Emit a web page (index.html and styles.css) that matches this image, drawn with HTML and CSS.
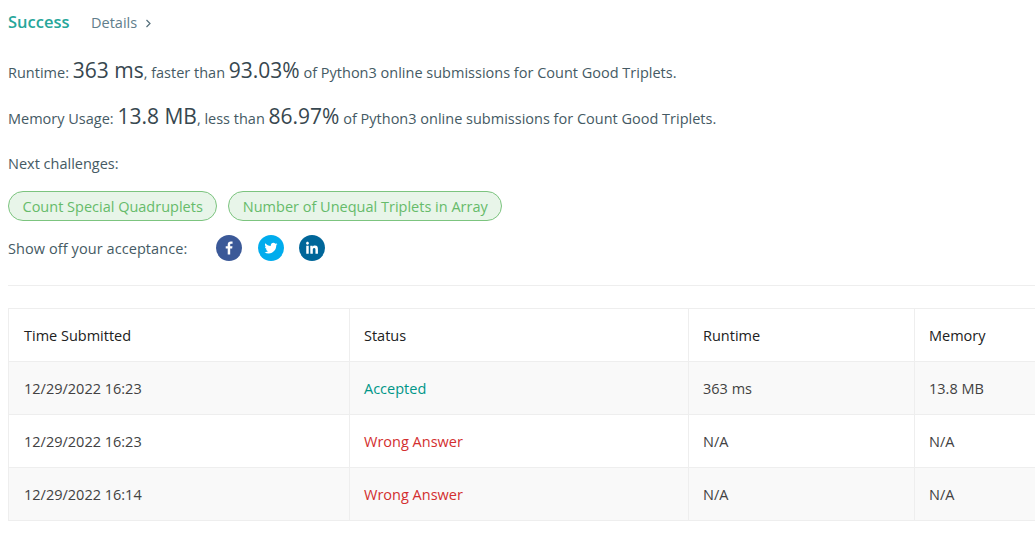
FILE: index.html
```html
<!DOCTYPE html>
<html>
  <head>
    <title>Submission Detail</title>
    <link rel="stylesheet" href="styles.css">
  </head>
  <body>
    <div class="result-head">
      <span class="success">Success</span>
      <span class="details">Details</span>
      <svg class="chevron" width="7" height="9" viewBox="0 0 7 9"><path d="M1.500 1 L5 4.500 L1.500 8" fill="none" stroke="#546e7a" stroke-width="1.200"/></svg>
    </div>
    <p class="stat stat-first">Runtime: <span class="big">363 ms</span>, faster than <span class="big">93.03%</span> of Python3 online submissions for Count Good Triplets.</p>
    <p class="stat">Memory Usage: <span class="big">13.8 MB</span>, less than <span class="big">86.97%</span> of Python3 online submissions for Count Good Triplets.</p>
    <p class="stat next-label">Next challenges:</p>
    <div class="tags">
      <a class="tag">Count Special Quadruplets</a>
      <a class="tag">Number of Unequal Triplets in Array</a>
    </div>
    <div class="share">
      <span class="share-label">Show off your acceptance:</span>
      <svg class="social" width="26" height="26" viewBox="0 0 26 26"><circle cx="13" cy="13" r="13" fill="#3b5998"/><path transform="translate(.6 .6) scale(.95)" d="M14.300 20v-6.300h2.100l.3-2.500h-2.400V9.700c0-.7.200-1.200 1.200-1.200h1.300V6.300c-.2 0-1-.1-1.900-.1-1.900 0-3.200 1.200-3.200 3.300v1.700H9.600v2.500h2.100V20z" fill="#fff"/></svg>
      <svg class="social" width="26" height="26" viewBox="0 0 26 26"><circle cx="13" cy="13" r="13" fill="#00aced"/><path transform="translate(1.800 1.800) scale(.86)" d="M20.500 8.400c-.6.300-1.200.4-1.800.5.600-.4 1.100-1 1.400-1.700-.6.400-1.300.6-2 .8-.6-.6-1.400-1-2.300-1-1.700 0-3.100 1.400-3.100 3.100 0 .2 0 .5.100.7-2.600-.1-4.900-1.400-6.400-3.300-.3.500-.4 1-.4 1.600 0 1.100.5 2 1.400 2.600-.5 0-1-.2-1.400-.4 0 1.500 1.100 2.800 2.500 3.100-.5.100-.9.100-1.400.1.400 1.200 1.500 2.100 2.900 2.100-1.100.8-2.400 1.300-3.800 1.300h-.7c1.400.9 3 1.400 4.800 1.400 5.700 0 8.800-4.700 8.800-8.800v-.4c.5-.4 1-1 1.400-1.700z" fill="#fff"/></svg>
      <svg class="social social-in" width="26" height="26" viewBox="0 0 26 26"><circle cx="13" cy="13" r="13" fill="#006699"/><path transform="translate(.6 .6) scale(.95)" d="M7 10.700h2.600V19H7zM8.300 6.600c.8 0 1.500.7 1.500 1.500s-.7 1.500-1.500 1.500-1.500-.7-1.500-1.500.7-1.500 1.500-1.500zM11.200 10.700h2.500v1.100c.4-.7 1.200-1.300 2.500-1.300 2.600 0 3.100 1.700 3.100 4V19h-2.600v-3.900c0-.9 0-2.100-1.300-2.100s-1.500 1-1.500 2V19h-2.600z" fill="#fff"/></svg>
    </div>
    <hr class="divider">
    <table class="submissions">
      <thead>
        <tr>
          <th class="col-time">Time Submitted</th>
          <th class="col-status">Status</th>
          <th class="col-runtime">Runtime</th>
          <th class="col-memory">Memory</th>
        </tr>
      </thead>
      <tbody>
        <tr class="striped">
          <td>12/29/2022 16:23</td>
          <td class="accepted">Accepted</td>
          <td>363 ms</td>
          <td>13.8 MB</td>
        </tr>
        <tr>
          <td>12/29/2022 16:23</td>
          <td class="wrong">Wrong Answer</td>
          <td>N/A</td>
          <td>N/A</td>
        </tr>
        <tr class="striped">
          <td>12/29/2022 16:14</td>
          <td class="wrong">Wrong Answer</td>
          <td>N/A</td>
          <td>N/A</td>
        </tr>
      </tbody>
    </table>
  </body>
</html>
```
FILE: styles.css
```css
html, body {
  overflow: hidden;
}
body {
  font-family: "Open Sans", "Noto Sans", sans-serif;
  font-size: 14.5px;
  color: #546e7a;
  margin: 0;
  padding: 10px 0 0 8px;
  width: 1400px;
  height: 525px;
  background-color: #fff;
}
.result-head {
  display: flex;
  align-items: center;
  height: 24px;
}
.success {
  font-size: 16.500px;
  font-weight: 600;
  color: #26a69a;
  width: 83px;
  padding-bottom: 2px;
}
.details {
  color: #607d8b;
  margin-right: 8px;
}
.chevron {
  margin-top: 3px;
}
.stat {
  margin: 0;
  height: 46px;
  line-height: 46px;
  color: #455a64;
}
.stat-first {
  margin-top: 13px;
}
.next-label {
  margin-top: 2px;
}
.big {
  font-size: 21px;
  color: #37474f;
}
.tags {
  display: flex;
  gap: 11px;
  margin-top: 4px;
}
.tag {
  box-sizing: border-box;
  height: 30px;
  line-height: 29px;
  padding: 0 13.500px;
  border: 1px solid #7cc47f;
  border-radius: 15px;
  background-color: #e8f5e9;
  color: #66bb6a;
}
.share {
  display: flex;
  align-items: center;
  height: 30px;
  margin-top: 12px;
}
.share-label {
  width: 208px;
  color: #455a64;
  letter-spacing: 0.08px;
}
.social {
  margin-right: 16px;
}
.social-in {
  margin-left: -1px;
}
.divider {
  width: 1027px;
  margin: 22px 0;
  border: 0;
  border-top: 1px solid #eee;
}
.submissions {
  border-collapse: collapse;
  table-layout: fixed;
  width: 1200px;
  color: #424242;
}
.submissions th,
.submissions td {
  box-sizing: border-box;
  height: 53px;
  padding: 0 14px;
  border: 1px solid #eee;
  text-align: left;
  font-weight: 400;
}
.submissions th {
  color: #212121;
  padding-top: 1px;
}
.submissions .col-time,
.submissions td:first-child {
  padding-left: 15px;
}
.col-time {
  width: 341px;
}
.col-status {
  width: 339px;
}
.col-runtime {
  width: 226px;
}
.striped {
  background-color: #f9f9f9;
}
.accepted {
  color: #009688;
}
.wrong {
  color: #d32f2f;
}
```
